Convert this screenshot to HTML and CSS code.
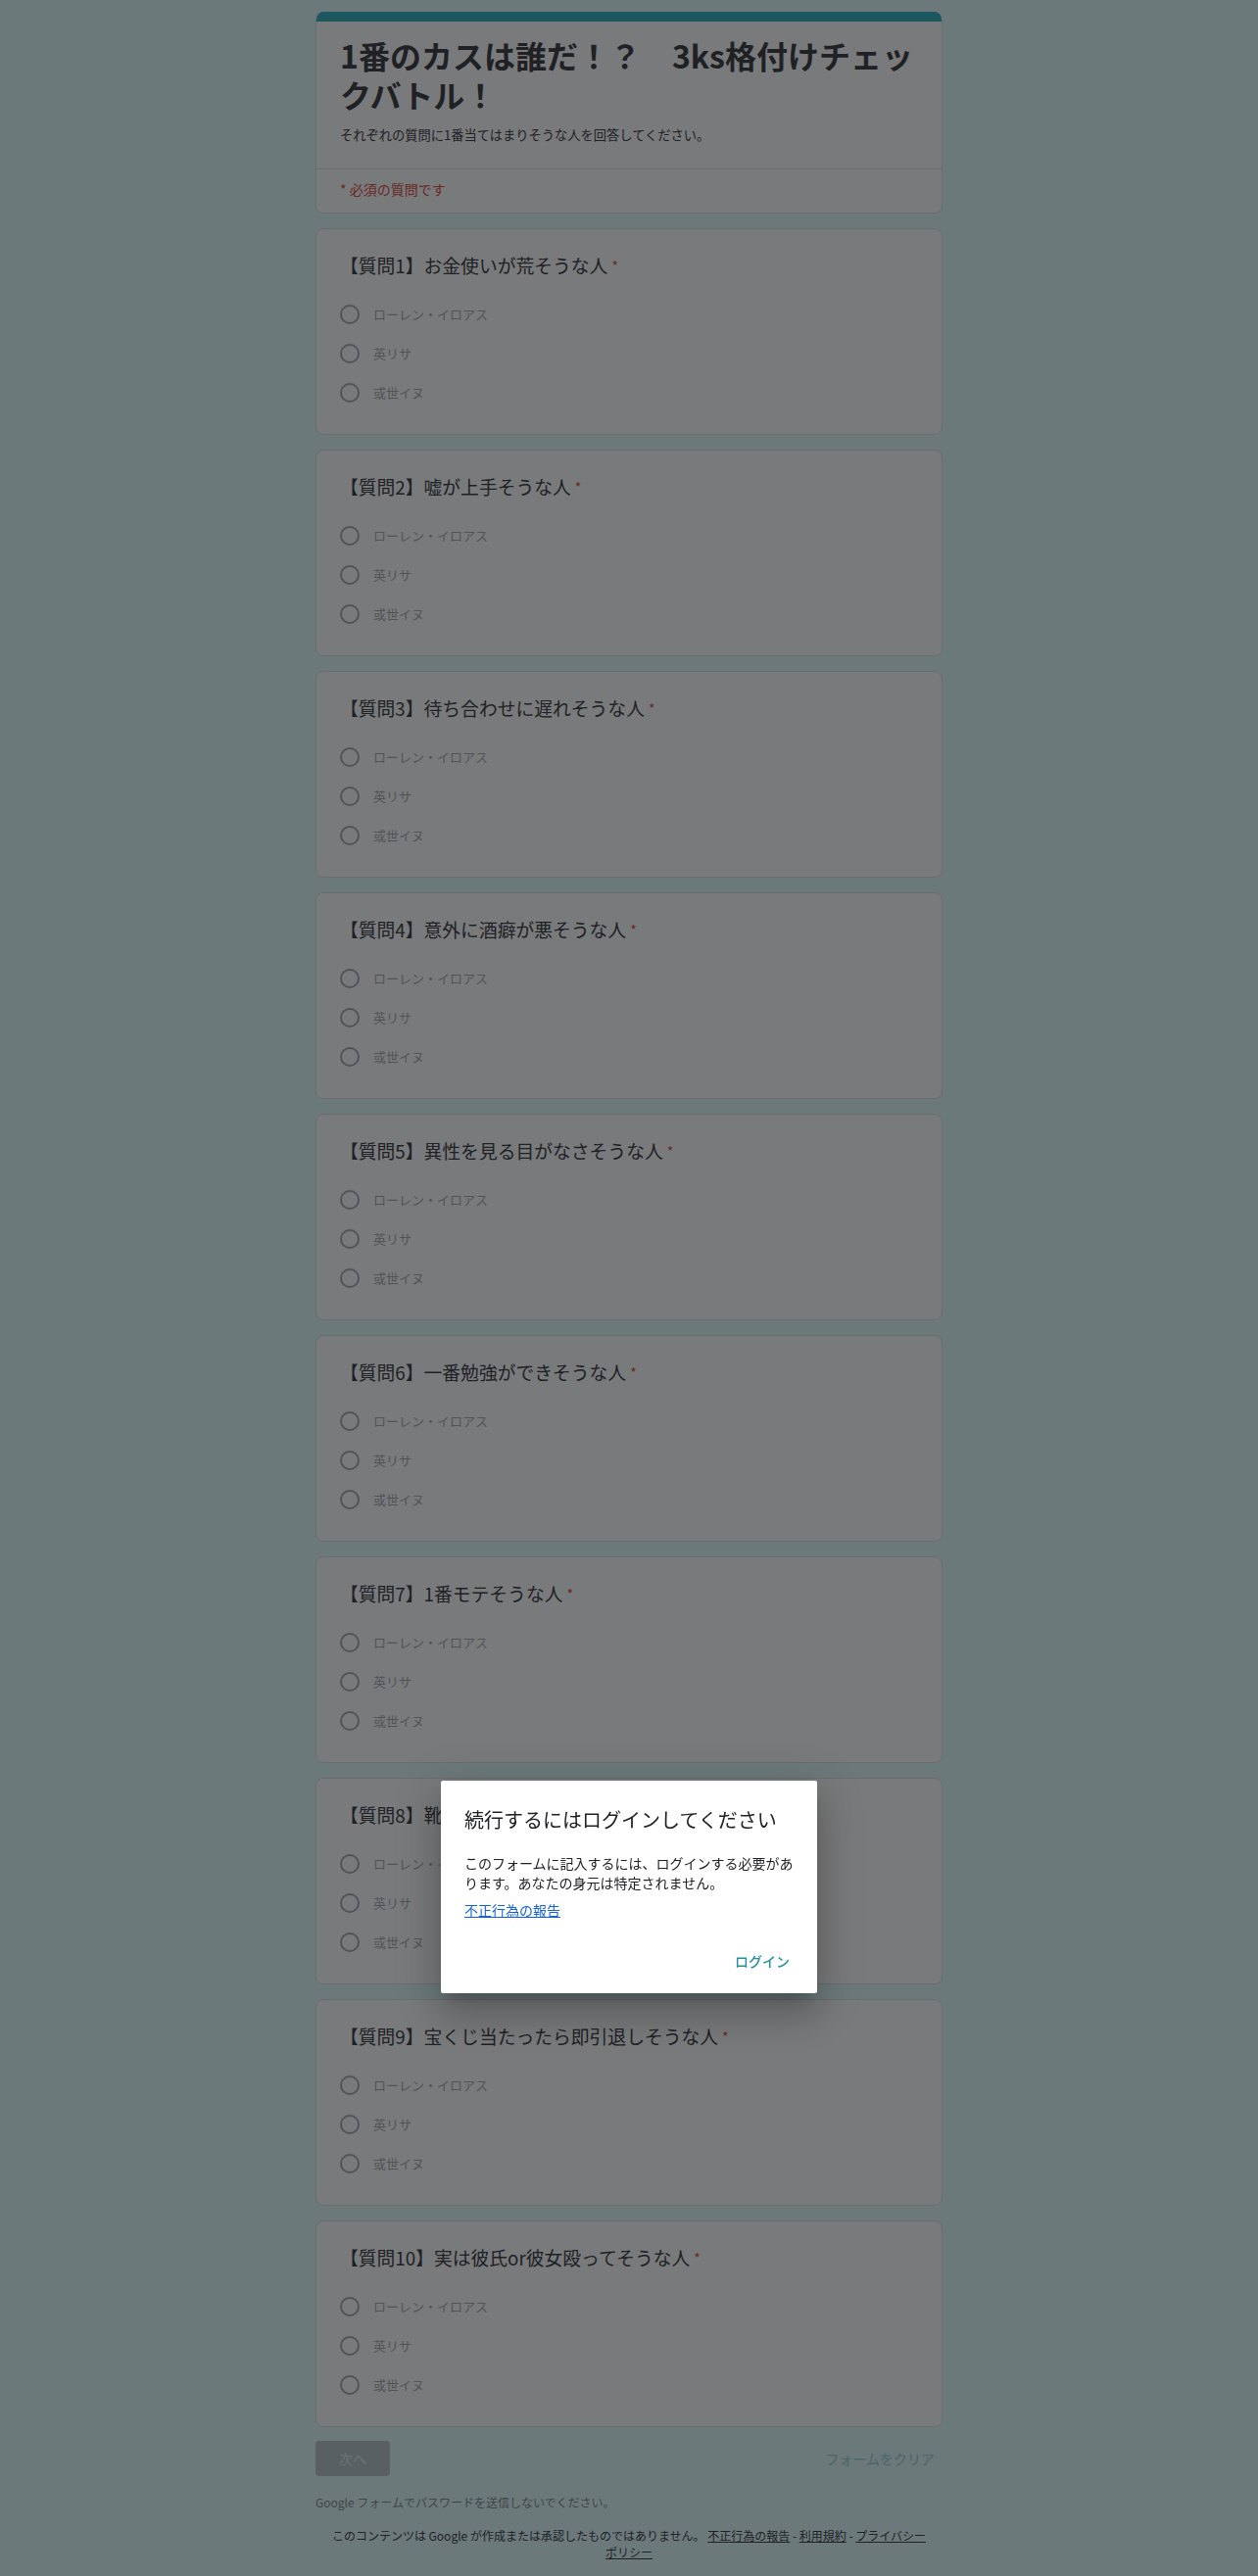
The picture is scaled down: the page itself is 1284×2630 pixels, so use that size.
FILE: index.html
```html
<!DOCTYPE html>
<html lang="ja">
<head>
<meta charset="utf-8">
<title>1番のカスは誰だ！？　3ks格付けチェックバトル！</title>
<link rel="stylesheet" href="styles.css">
</head>
<body>
<div class="page">
  <div class="card header">
    <div class="topbar"></div>
    <div class="head-main">
      <h1 class="form-title">1番のカスは誰だ！？　3ks格付けチェックバトル！</h1>
      <div class="form-desc">それぞれの質問に1番当てはまりそうな人を回答してください。</div>
    </div>
    <div class="head-req">* 必須の質問です</div>
  </div>

  <div class="card q">
    <div class="q-title">【質問1】お金使いが荒そうな人<span class="req">*</span></div>
    <div class="opts">
      <div class="opt"><span class="radio"></span><span class="opt-label">ローレン・イロアス</span></div>
      <div class="opt"><span class="radio"></span><span class="opt-label">英リサ</span></div>
      <div class="opt"><span class="radio"></span><span class="opt-label">或世イヌ</span></div>
    </div>
  </div>

  <div class="card q">
    <div class="q-title">【質問2】嘘が上手そうな人<span class="req">*</span></div>
    <div class="opts">
      <div class="opt"><span class="radio"></span><span class="opt-label">ローレン・イロアス</span></div>
      <div class="opt"><span class="radio"></span><span class="opt-label">英リサ</span></div>
      <div class="opt"><span class="radio"></span><span class="opt-label">或世イヌ</span></div>
    </div>
  </div>

  <div class="card q">
    <div class="q-title">【質問3】待ち合わせに遅れそうな人<span class="req">*</span></div>
    <div class="opts">
      <div class="opt"><span class="radio"></span><span class="opt-label">ローレン・イロアス</span></div>
      <div class="opt"><span class="radio"></span><span class="opt-label">英リサ</span></div>
      <div class="opt"><span class="radio"></span><span class="opt-label">或世イヌ</span></div>
    </div>
  </div>

  <div class="card q">
    <div class="q-title">【質問4】意外に酒癖が悪そうな人<span class="req">*</span></div>
    <div class="opts">
      <div class="opt"><span class="radio"></span><span class="opt-label">ローレン・イロアス</span></div>
      <div class="opt"><span class="radio"></span><span class="opt-label">英リサ</span></div>
      <div class="opt"><span class="radio"></span><span class="opt-label">或世イヌ</span></div>
    </div>
  </div>

  <div class="card q">
    <div class="q-title">【質問5】異性を見る目がなさそうな人<span class="req">*</span></div>
    <div class="opts">
      <div class="opt"><span class="radio"></span><span class="opt-label">ローレン・イロアス</span></div>
      <div class="opt"><span class="radio"></span><span class="opt-label">英リサ</span></div>
      <div class="opt"><span class="radio"></span><span class="opt-label">或世イヌ</span></div>
    </div>
  </div>

  <div class="card q">
    <div class="q-title">【質問6】一番勉強ができそうな人<span class="req">*</span></div>
    <div class="opts">
      <div class="opt"><span class="radio"></span><span class="opt-label">ローレン・イロアス</span></div>
      <div class="opt"><span class="radio"></span><span class="opt-label">英リサ</span></div>
      <div class="opt"><span class="radio"></span><span class="opt-label">或世イヌ</span></div>
    </div>
  </div>

  <div class="card q">
    <div class="q-title">【質問7】1番モテそうな人<span class="req">*</span></div>
    <div class="opts">
      <div class="opt"><span class="radio"></span><span class="opt-label">ローレン・イロアス</span></div>
      <div class="opt"><span class="radio"></span><span class="opt-label">英リサ</span></div>
      <div class="opt"><span class="radio"></span><span class="opt-label">或世イヌ</span></div>
    </div>
  </div>

  <div class="card q">
    <div class="q-title">【質問8】靴下を左右バラバラに履いてそうな人<span class="req">*</span></div>
    <div class="opts">
      <div class="opt"><span class="radio"></span><span class="opt-label">ローレン・イロアス</span></div>
      <div class="opt"><span class="radio"></span><span class="opt-label">英リサ</span></div>
      <div class="opt"><span class="radio"></span><span class="opt-label">或世イヌ</span></div>
    </div>
  </div>

  <div class="card q">
    <div class="q-title">【質問9】宝くじ当たったら即引退しそうな人<span class="req">*</span></div>
    <div class="opts">
      <div class="opt"><span class="radio"></span><span class="opt-label">ローレン・イロアス</span></div>
      <div class="opt"><span class="radio"></span><span class="opt-label">英リサ</span></div>
      <div class="opt"><span class="radio"></span><span class="opt-label">或世イヌ</span></div>
    </div>
  </div>

  <div class="card q">
    <div class="q-title">【質問10】実は彼氏or彼女殴ってそうな人<span class="req">*</span></div>
    <div class="opts">
      <div class="opt"><span class="radio"></span><span class="opt-label">ローレン・イロアス</span></div>
      <div class="opt"><span class="radio"></span><span class="opt-label">英リサ</span></div>
      <div class="opt"><span class="radio"></span><span class="opt-label">或世イヌ</span></div>
    </div>
  </div>

  <div class="actions">
    <button class="btn-next" disabled>次へ</button>
    <button class="btn-clear">フォームをクリア</button>
  </div>
  <div class="pw-note">Google フォームでパスワードを送信しないでください。</div>
  <div class="footer">このコンテンツは Google が作成または承認したものではありません。 <a class="foot-link" href="#">不正行為の報告</a> - <a class="foot-link" href="#">利用規約</a> - <a class="foot-link" href="#">プライバシー ポリシー</a></div>
</div>

<div class="scrim"></div>
<div class="dialog">
  <div class="dlg-title">続行するにはログインしてください</div>
  <div class="dlg-body">このフォームに記入するには、ログインする必要があります。あなたの身元は特定されません。</div>
  <a class="dlg-link" href="#">不正行為の報告</a>
  <div class="dlg-actions"><button class="dlg-btn">ログイン</button></div>
</div>
</body>
</html>
```

FILE: styles.css
```css
* { box-sizing: border-box; }
html, body { margin: 0; padding: 0; }
body {
  background: #defcfa;
  font-family: "Noto Sans CJK JP", "Noto Sans", sans-serif;
  color: #202124;
}
.page {
  width: 640px;
  margin: 0 auto;
  padding-top: 12px;
  display: flex;
  flex-direction: column;
  gap: 15px;
}
.card {
  background: #ffffff;
  border: 1px solid #dadce0;
  border-radius: 8px;
}
.header {
  border-top: none;
  overflow: hidden;
}
.topbar {
  height: 10px;
  background: #1aa9ba;
}
.head-main {
  padding: 14px 24px 24px;
  border-bottom: 1px solid #dadce0;
}
.form-title {
  margin: 0;
  font-size: 32px;
  line-height: 40px;
  font-weight: 700;
  color: #202124;
}
.form-desc {
  margin-top: 12px;
  font-size: 13.25px;
  line-height: 20px;
  color: #202124;
}
.head-req {
  padding: 10px 24px 14px;
  font-size: 14px;
  line-height: 20px;
  color: #d93025;
}
.q {
  padding: 25px 24px 22px;
}
.q-title {
  font-size: 18.8px;
  line-height: 24px;
  color: #202124;
  white-space: nowrap;
}
.req {
  color: #d93025;
  margin-left: 4px;
  font-size: 14px;
  vertical-align: top;
}
.opts {
  margin-top: 18px;
  display: flex;
  flex-direction: column;
}
.opt {
  height: 40px;
  display: flex;
  align-items: center;
}
.radio {
  width: 20px;
  height: 20px;
  border: 2px solid #9aa0a6;
  border-radius: 50%;
  margin-right: 14px;
  flex: none;
}
.opt-label {
  font-size: 13px;
  line-height: 20px;
  color: #9aa0a6;
}
.actions {
  margin-top: -1px;
  display: flex;
  justify-content: space-between;
  align-items: center;
}
.btn-next {
  width: 76px;
  height: 36px;
  border: none;
  border-radius: 4px;
  background: #aebfbe;
  color: #ffffff;
  font-family: inherit;
  font-size: 14px;
  padding: 0;
}
.btn-next:disabled {
  color: #e6eded;
}
.btn-clear {
  height: 32px;
  border: none;
  background: transparent;
  padding: 0 8px;
  font-family: inherit;
  font-size: 14px;
  font-weight: 500;
  color: #93d3d8;
}
.pw-note {
  margin-top: 4px;
  font-size: 12px;
  line-height: 16px;
  color: #6f7c7c;
}
.footer {
  margin-top: 2px;
  padding: 0 14px;
  text-align: center;
  font-size: 12px;
  line-height: 17px;
  color: #202124;
}
.foot-link {
  color: #202124;
  text-decoration: underline;
}
.scrim {
  position: fixed;
  inset: 0;
  background: rgba(32, 33, 36, 0.6);
}
.dialog {
  position: absolute;
  top: 1818px;
  left: 50%;
  width: 384px;
  margin-left: -192px;
  background: #ffffff;
  border-radius: 2px;
  padding: 24px 22px 15px 24px;
  box-shadow: 0 11px 15px -7px rgba(0,0,0,.2), 0 24px 38px 3px rgba(0,0,0,.14), 0 9px 46px 8px rgba(0,0,0,.12);
  display: flex;
  flex-direction: column;
  align-items: flex-start;
}
.dlg-title {
  font-size: 20px;
  line-height: 32px;
  color: #202124;
}
.dlg-body {
  margin-top: 18px;
  font-size: 14px;
  line-height: 20px;
  color: #202124;
}
.dlg-link {
  margin-top: 8px;
  font-size: 14px;
  line-height: 20px;
  color: #1a62d0;
  text-decoration: underline;
}
.dlg-actions {
  margin-top: 24px;
  align-self: stretch;
  display: flex;
  justify-content: flex-end;
}
.dlg-btn {
  height: 36px;
  padding: 0 6px;
  border: none;
  background: transparent;
  font-family: inherit;
  font-size: 14px;
  font-weight: 500;
  color: #2a8f99;
}
```
